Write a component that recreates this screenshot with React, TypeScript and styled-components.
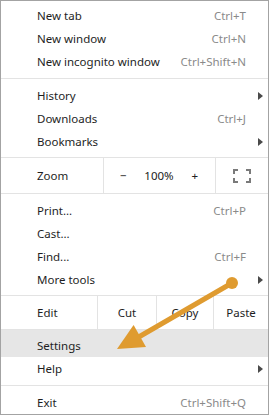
import React from "react";
import styled, { createGlobalStyle } from "styled-components";

const GlobalStyle = createGlobalStyle`
  html, body {
    margin: 0;
    padding: 0;
    background: #ffffff;
  }
  body {
    font-family: "Noto Sans", "Open Sans", sans-serif;
  }
`;

const Page = styled.div`
  position: relative;
  width: 272px;
  height: 417px;
  background: #ffffff;
`;

const Menu = styled.div`
  width: 269px;
  height: 415px;
  border: 1px solid #a3a3a3;
  background: #ffffff;
  display: flex;
  flex-direction: column;
  padding-top: 3px;
  box-sizing: border-box;
`;

const Item = styled.div<{ $active?: boolean }>`
  display: flex;
  align-items: center;
  flex-shrink: 0;
  height: ${(p) => (p.$active ? "27px" : "23px")};
  padding: ${(p) => (p.$active ? "4px 0 0 36px" : "0 0 0 36px")};
  box-sizing: border-box;
  background: ${(p) => (p.$active ? "#e6e6e6" : "transparent")};
  font-size: 11.5px;
  color: #1e1e1e;
`;

const Label = styled.span`
  flex: 1;
`;

const Shortcut = styled.span`
  color: #8a8a8a;
  margin-right: 22px;
`;

const SubArrow = styled.span`
  width: 0;
  height: 0;
  border-top: 4px solid transparent;
  border-bottom: 4px solid transparent;
  border-left: 5px solid #4a4a4a;
  margin-right: 5px;
`;

const Separator = styled.div<{ $above?: number; $below?: number }>`
  flex-shrink: 0;
  height: 1px;
  background: #e3e3e3;
  margin-top: ${(p) => p.$above ?? 5}px;
  margin-bottom: ${(p) => p.$below ?? 5}px;
`;

const SplitRow = styled.div<{ $cols: string; $height: number; $above: number; $below?: number }>`
  flex-shrink: 0;
  display: grid;
  grid-template-columns: ${(p) => p.$cols};
  height: ${(p) => p.$height}px;
  margin-top: ${(p) => p.$above}px;
  margin-bottom: ${(p) => p.$below ?? 0}px;
  border-top: 1px solid #e3e3e3;
  border-bottom: 1px solid #e3e3e3;
  font-size: 11.5px;
  color: #1e1e1e;
`;

const RowLabel = styled.div`
  display: flex;
  align-items: center;
  padding-left: 36px;
`;

const Cell = styled.div`
  display: flex;
  align-items: center;
  justify-content: center;
  border-left: 1px solid #e3e3e3;
`;

const ZoomControls = styled(Cell)`
  justify-content: space-between;
  padding: 0 17px 0 16px;
`;

const Glyph = styled.span`
  color: #222;
`;

const Overlay = styled.svg`
  position: absolute;
  left: 0;
  top: 0;
  pointer-events: none;
`;

type Entry = { label: string; shortcut?: string; sub?: boolean; active?: boolean };

const renderItems = (items: Entry[]) =>
  items.map((it) => (
    <Item key={it.label} $active={it.active}>
      <Label>{it.label}</Label>
      {it.shortcut && <Shortcut>{it.shortcut}</Shortcut>}
      {it.sub && <SubArrow />}
    </Item>
  ));

const FullscreenIcon = () => (
  <svg width="18" height="14" viewBox="0 0 18 14" fill="none" stroke="#7a7a7a" strokeWidth="2">
    <path d="M1 5V1h4" />
    <path d="M13 1h4v4" />
    <path d="M17 9v4h-4" />
    <path d="M5 13H1V9" />
  </svg>
);

const App = () => {
  return (
    <>
      <GlobalStyle />
      <Page>
        <Menu>
          {renderItems([
            { label: "New tab", shortcut: "Ctrl+T" },
            { label: "New window", shortcut: "Ctrl+N" },
            { label: "New incognito window", shortcut: "Ctrl+Shift+N" },
          ])}
          <Separator />
          {renderItems([
            { label: "History", sub: true },
            { label: "Downloads", shortcut: "Ctrl+J" },
            { label: "Bookmarks", sub: true },
          ])}
          <SplitRow $cols="102px 112px 1fr" $height={35} $above={4} $below={5}>
            <RowLabel>Zoom</RowLabel>
            <ZoomControls>
              <Glyph>−</Glyph>
              <Glyph>100%</Glyph>
              <Glyph>+</Glyph>
            </ZoomControls>
            <Cell>
              <FullscreenIcon />
            </Cell>
          </SplitRow>
          {renderItems([
            { label: "Print...", shortcut: "Ctrl+P" },
            { label: "Cast..." },
            { label: "Find...", shortcut: "Ctrl+F" },
            { label: "More tools", sub: true },
          ])}
          <SplitRow $cols="96px 59px 57px 1fr" $height={33} $above={4}>
            <RowLabel>Edit</RowLabel>
            <Cell>Cut</Cell>
            <Cell>Copy</Cell>
            <Cell>Paste</Cell>
          </SplitRow>
          {renderItems([
            { label: "Settings", active: true },
            { label: "Help", sub: true },
          ])}
          <Separator />
          {renderItems([{ label: "Exit", shortcut: "Ctrl+Shift+Q" }])}
        </Menu>
        <Overlay width="272" height="417" viewBox="0 0 272 417">
          <line x1="232" y1="283" x2="137" y2="338" stroke="#df9b30" strokeWidth="5" strokeLinecap="round" />
          <circle cx="232" cy="283" r="6" fill="#df9b30" />
          <polygon points="117,349 133.6,325 146,347" fill="#df9b30" />
        </Overlay>
      </Page>
    </>
  );
};

export default App;
